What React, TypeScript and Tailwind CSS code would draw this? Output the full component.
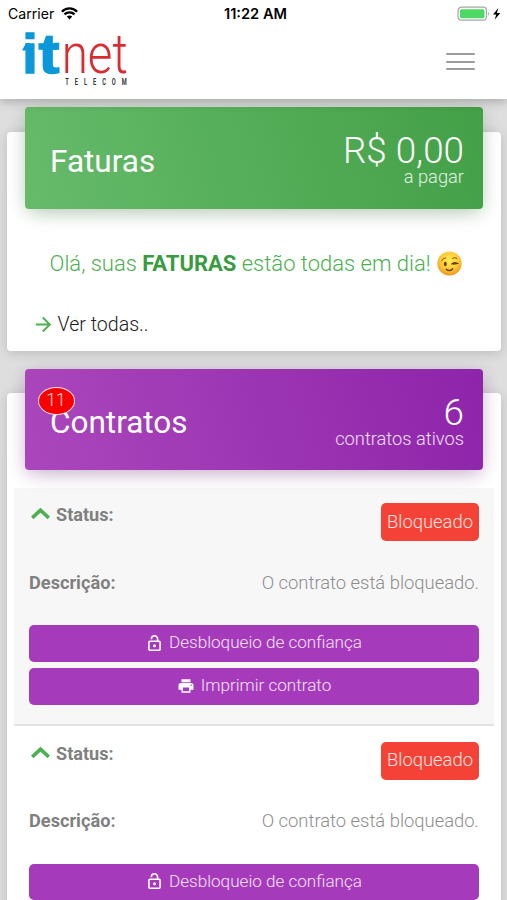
import type { ReactNode } from 'react';
import { MdArrowForward, MdPrint } from 'react-icons/md';

function StatusBar() {
  return (
    <div className="flex h-[27px] items-center px-[8px] text-black">
      <div className="flex flex-1 items-center gap-[7px] pt-[1px] font-['Inter',sans-serif]">
        <span className="text-[14.1px]">Carrier</span>
        <svg className="h-[13px] w-[17px]" viewBox="0 0 17 13" fill="none" stroke="#000" strokeWidth="2.3">
          <path d="M0.9 4.8C5.2 .3 11.8 .3 16.1 4.8M3.5 7.4c2.8-2.8 7.2-2.8 10 0" />
          <path d="M8.5 12.4 5.8 9.5c1.5-1.5 3.9-1.5 5.4 0z" fill="#000" stroke="none" />
        </svg>
      </div>
      <span className="pl-[4px] pt-[2px] font-['Inter',sans-serif] text-[14.6px] font-semibold">11:22 AM</span>
      <div className="flex flex-1 items-center justify-end">
        <svg className="-mr-[3px] h-[16px] w-[45px]" viewBox="0 0 45 16">
          <rect x="1" y="1.2" width="28.5" height="13" rx="3.5" fill="#fff" stroke="#a6a6a6" strokeWidth="1.2" />
          <rect x="3" y="3.2" width="24.5" height="9" rx="1.5" fill="#4cd964" />
          <path d="M31 5.7q2 2 0 4z" fill="#a6a6a6" />
          <path d="M41.3 2 36 8.4h3.2L37.7 13.7l5.6-6.8h-3.4z" fill="#000" />
        </svg>
      </div>
    </div>
  );
}

function Logo() {
  return (
    <svg className="h-[56px] w-[108px] overflow-visible" viewBox="22 32 108 56" role="img" aria-label="itnet telecom">
      <g fill="#0a98da">
        <text x="22.2" y="73" fontFamily="Liberation Sans" fontWeight="700" fontSize="56" stroke="#0a98da" strokeWidth="1.4">i</text>
        <text x="38.4" y="73" fontFamily="Liberation Sans" fontWeight="700" fontSize="55" textLength="21" lengthAdjust="spacingAndGlyphs" stroke="#0a98da" strokeWidth="1.4">t</text>
        <path d="M22 50.5 26 43h4v7.5zM54 42.8h5.6l-3.2 7.2H54z" />
      </g>
      <text x="61.7" y="73.4" fontFamily="Roboto" fontWeight="300" fontSize="55" textLength="66" lengthAdjust="spacingAndGlyphs" fill="#d92b30">net</text>
      <g transform="translate(65.2 85.3) scale(.66 1)">
        <text fontFamily="Roboto" fontWeight="700" fontSize="8.6" letterSpacing="9.1" fill="#333">TELECOM</text>
      </g>
    </svg>
  );
}

function Wink() {
  return (
    <svg className="h-[25px] w-[25px]" viewBox="0 0 25 25" fill="none" strokeLinecap="round">
      <defs>
        <radialGradient id="face" cx="50%" cy="38%" r="62%">
          <stop offset="0" stopColor="#ffed54" />
          <stop offset=".6" stopColor="#fdcb37" />
          <stop offset="1" stopColor="#ef941d" />
        </radialGradient>
      </defs>
      <circle cx="12.5" cy="12.5" r="12.1" fill="url(#face)" />
      <ellipse cx="8.3" cy="13" rx="1.5" ry="2.2" fill="#6b3f0c" />
      <path d="M4.6 9.8q1-2.7 4.2-3M15.5 7.3q2.7-1.4 4.4 0" stroke="#8a5613" strokeWidth="1" />
      <path d="M14.8 13q2.3-2.4 5.5-.6l-3.8.8" stroke="#6b3f0c" strokeWidth="1.3" />
      <path d="M9.2 18.3q3.5 2.9 6.5-.6" stroke="#6b3f0c" strokeWidth="1.4" />
    </svg>
  );
}

function OpenLock() {
  return (
    <svg className="mx-[2px] mt-[1px] h-[16px] w-[13px]" viewBox="0 0 13 16" fill="none" stroke="#fff" strokeWidth="1.6">
      <rect x="0.9" y="6.2" width="11.2" height="9" rx="1" />
      <path d="M3.4 4.2V3.9a3.1 3.1 0 0 1 6.2 0v2.3" />
      <circle cx="6.5" cy="10.7" r="1.5" fill="#fff" stroke="none" />
    </svg>
  );
}

function ActionButton({ icon, children }: { icon: ReactNode; children: ReactNode }) {
  return (
    <button className="flex h-[36.5px] w-full items-center justify-center gap-[6px] rounded-[5px] bg-[#a53bbb] pb-[2px] text-[17.1px] font-light leading-[22px] text-white/85">
      {icon}
      <span>{children}</span>
    </button>
  );
}

function Contract({ shaded }: { shaded?: boolean }) {
  return (
    <section className={`h-[238.5px] shrink-0 border-b-2 border-[#e2e2e2] px-[15px] pt-[15.5px] ${shaded ? 'bg-[#f7f7f7]' : 'bg-white'}`}>
      <div className="flex h-[38px] items-start justify-between">
        <div className="flex items-center gap-[6px] text-[18.1px] font-bold leading-[24px] text-[#808080]">
          <svg className="-mt-[2px] ml-[2px] h-[14px] w-[19px]" viewBox="0 0 19 14" fill="none" stroke="#4caf50" strokeWidth="3.6">
            <path d="M1.2 10.8 9.5 3.2 17.8 10.8" />
          </svg>
          Status:
        </div>
        <span className="flex h-[38px] w-[98px] items-center justify-center rounded-[5px] bg-[#f44336] pb-[1px] text-[18.4px] font-light leading-[24px] text-white/85">Bloqueado</span>
      </div>
      <div className="mt-[29.5px] flex h-[24px] items-center justify-between text-[18.2px]">
        <span className="font-bold text-[#808080]">Descrição:</span>
        <span className="text-[18.4px] font-light text-[#8d8d8d]">O contrato está bloqueado.</span>
      </div>
      <div className="mt-[30.5px] flex flex-col gap-[6.5px]">
        <ActionButton icon={<OpenLock />}>Desbloqueio de confiança</ActionButton>
        <ActionButton icon={<MdPrint className="mt-[1px] size-[18px] text-white" />}>Imprimir contrato</ActionButton>
      </div>
    </section>
  );
}

export default function App() {
  return (
    <div className="flex h-[900px] w-[507px] flex-col overflow-hidden bg-[#dedede] font-['Roboto',sans-serif]">
      <header className="relative z-10 h-[98.5px] shrink-0 bg-white shadow-[0_2px_10px_rgba(0,0,0,0.26)]">
        <StatusBar />
        <div className="flex items-start justify-between pl-[22px] pr-[32px] pt-[5px]">
          <Logo />
          <div className="mt-[21px] flex w-[29px] flex-col gap-[5.3px]">
            <i className="h-[2.3px] rounded-full bg-[#9b9b9b]" />
            <i className="h-[2.3px] rounded-full bg-[#9b9b9b]" />
            <i className="h-[2.3px] rounded-full bg-[#9b9b9b]" />
          </div>
        </div>
      </header>

      <main className="flex flex-col px-[7px]">
        <article className="mt-[33px] h-[219.5px] w-[494px] shrink-0 rounded-[4px] bg-white px-[18px] shadow-[0_2px_12px_rgba(0,0,0,0.16)]">
          <div className="-mt-[24.5px] flex h-[101.5px] w-[457.5px] items-start justify-between rounded-[4px] bg-[linear-gradient(75deg,#66bb6a,#43a047)] pl-[25px] pr-[18.5px] text-white shadow-[0_6px_22px_-6px_rgba(0,0,0,0.22),0_4px_16px_rgba(76,175,80,0.2)]">
            <h2 className="mt-[34.5px] text-[31.5px] leading-[40px]">Faturas</h2>
            <div className="mt-[25px] text-right font-light">
              <div className="text-[36.8px] leading-[38px]">R$ 0,00</div>
              <div className="-mt-[4px] text-[18.3px] leading-[22px] text-white/85">a pagar</div>
            </div>
          </div>
          <p className="mt-[40px] flex h-[30px] items-center gap-[6px] whitespace-nowrap pl-[24.5px] text-[22px] font-light text-[#4caf50]">
            <span>Olá, suas <b className="font-bold text-[#389c3e]">FATURAS</b> estão todas em dia!</span>
            <Wink />
          </p>
          <a className="mt-[33px] flex h-[26px] items-center gap-[3px] pl-[6.5px] text-[19.6px] font-light text-[#212121]">
            <MdArrowForward className="size-[23px] text-[#4caf50]" />
            Ver todas..
          </a>
        </article>

        <article className="mt-[42px] h-[560px] w-[494px] shrink-0 rounded-[4px] bg-white px-[7px] shadow-[0_2px_12px_rgba(0,0,0,0.16)]">
          <div className="relative -mt-[24.5px] ml-[11px] flex h-[101.5px] w-[457.5px] items-start justify-between rounded-[4px] bg-[linear-gradient(75deg,#ab47bc,#8e24aa)] pl-[25px] pr-[18.5px] text-white shadow-[0_6px_22px_-6px_rgba(0,0,0,0.22),0_4px_16px_rgba(156,39,176,0.2)]">
            <h2 className="mt-[34.5px] text-[31.5px] leading-[40px]">Contratos</h2>
            <div className="mt-[25px] text-right font-light">
              <div className="text-[36.8px] leading-[38px]">6</div>
              <div className="-mt-[4px] text-[18.3px] leading-[22px] text-white/85">contratos ativos</div>
            </div>
            <span className="absolute left-[12.5px] top-[18px] flex h-[28px] w-[37px] items-center justify-center rounded-[50%] border border-white/85 bg-[#f80000] text-[17.5px] font-light leading-none text-white/85">11</span>
          </div>
          <div className="mt-[17.5px] flex w-[480px] flex-col">
            <Contract shaded />
            <Contract />
          </div>
        </article>
      </main>
    </div>
  );
}
